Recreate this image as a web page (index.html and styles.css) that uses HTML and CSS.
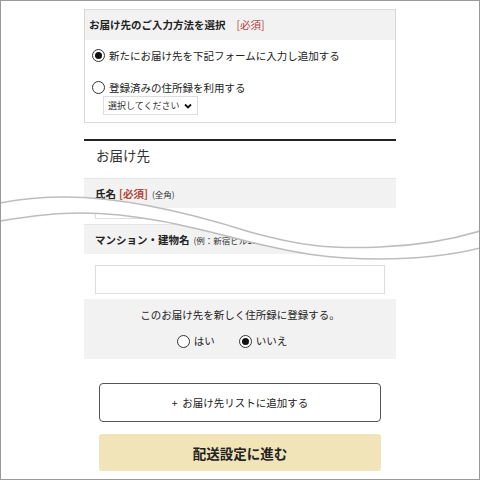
FILE: index.html
```html
<!DOCTYPE html>
<html lang="ja">
<head>
    <meta charset="UTF-8">
    <meta name="viewport" content="width=device-width, initial-scale=1.0">
    <title>お届け先の入力</title>
    <link rel="stylesheet" href="styles.css">
</head>
<body>
    <div class="frame">
        <div class="col">
            <div class="method">
                <div class="method-head">お届け先のご入力方法を選択<span class="req-plain">[必須]</span></div>
                <div class="method-body">
                    <div class="opt"><span class="radio on"></span>新たにお届け先を下記フォームに入力し追加する</div>
                    <div class="opt opt-2"><span class="radio"></span>登録済みの住所録を利用する</div>
                    <div class="select"><span>選択してください</span>
                        <svg width="8" height="6" viewBox="0 0 8 6"><path d="M1 1.5 L4 4.5 L7 1.5" fill="none" stroke="#111" stroke-width="1.8"/></svg>
                    </div>
                </div>
            </div>

            <div class="rule"></div>
            <div class="title">お届け先</div>

            <div class="row-label"><b>氏名</b><b class="req">[必須]</b><span class="note">(全角)</span></div>
            <div class="stub"></div>

            <div class="row-label row-2"><b>マンション・建物名</b><span class="note">(例：新宿ビル101)</span></div>
            <div class="field"></div>

            <div class="register">
                <p>このお届け先を新しく住所録に登録する。</p>
                <div class="yesno">
                    <span class="choice"><span class="radio"></span>はい</span>
                    <span class="choice"><span class="radio on"></span>いいえ</span>
                </div>
            </div>

            <div class="btn-add">+&nbsp; お届け先リストに追加する</div>
            <div class="btn-next">配送設定に進む</div>
        </div>

        <!-- omitted part of the form -->
        <svg class="cut" width="478" height="478" viewBox="1 1 478 478">
            <path d="M0,203 C20,199 40,197 65,197 C120,197 190,213 250,232 C300,246 330,249 380,247 C430,245 460,237 480,231 L480,209 L0,209 Z" fill="#fff"/>
            <path d="M0,203 C20,199 40,197 65,197 C120,197 190,213 250,232 C300,246 330,249 380,247 C430,245 460,237 480,231 L480,248 C460,253 430,259 380,259 C330,259 300,254 250,242 C195,228 140,213 80,213 C55,213 30,216 0,221 Z" fill="#fff"/>
            <path d="M0,203 C20,199 40,197 65,197 C120,197 190,213 250,232 C300,246 330,249 380,247 C430,245 460,237 480,231" fill="none" stroke="#bdbdbd" stroke-width="1.6"/>
            <path d="M0,221 C30,216 55,213 80,213 C140,213 195,228 250,242 C300,254 330,259 380,259 C430,259 460,253 480,248" fill="none" stroke="#bdbdbd" stroke-width="1.6"/>
        </svg>
    </div>
</body>
</html>
```

FILE: styles.css
```css
body {
    margin: 0;
    font-family: "Noto Sans CJK JP", "Noto Sans", sans-serif;
    color: #222;
}
.frame {
    width: 480px;
    height: 480px;
    box-sizing: border-box;
    border: 1px solid #999;
    position: relative;
    overflow: hidden;
    background: #fff;
}
.cut {
    position: absolute;
    top: 0;
    left: 0;
}
.col {
    width: 312px;
    margin: 0 auto;
    padding-top: 8px;
}
.method {
    border: 1px solid #d9d9d9;
}
.method-head {
    background: #f2f2f2;
    height: 30px;
    line-height: 30px;
    padding-left: 4px;
    font-size: 10.5px;
    font-weight: bold;
}
.req-plain {
    color: #b3443a;
    font-weight: normal;
    margin-left: 11px;
}
.method-body {
    padding: 7px 7px 7px;
}
.opt {
    display: flex;
    align-items: center;
    gap: 4px;
    height: 16px;
    font-size: 10.5px;
}
.opt-2 {
    margin-top: 16px;
}
.radio {
    width: 13px;
    height: 13px;
    box-sizing: border-box;
    border: 1px solid #333;
    border-radius: 50%;
    display: inline-flex;
    align-items: center;
    justify-content: center;
    background: #fff;
    flex-shrink: 0;
}
.radio.on::after {
    content: "";
    width: 7px;
    height: 7px;
    border-radius: 50%;
    background: #111;
}
.select {
    margin: 1px 0 0 11px;
    width: 95px;
    height: 19px;
    box-sizing: border-box;
    border: 1px solid #ddd;
    display: flex;
    align-items: center;
    justify-content: space-between;
    padding: 0 5px 0 4px;
    font-size: 9px;
    white-space: nowrap;
    color: #333;
}
.rule {
    margin-top: 16px;
    height: 2px;
    background: #222;
}
.title {
    margin-top: 4px;
    padding-left: 12px;
    height: 20px;
    line-height: 20px;
    font-size: 13.5px;
    color: #333;
}
.row-label {
    margin-top: 13px;
    height: 30px;
    box-sizing: border-box;
    border-top: 1px solid #e6e6e6;
    background: #f2f2f2;
    display: flex;
    align-items: center;
    padding-left: 11px;
    font-size: 10.5px;
}
.row-2 {
    margin-top: 5px;
}
.req {
    color: #b3443a;
    margin-left: 3px;
}
.note {
    font-size: 8.5px;
    margin-left: 4px;
    color: #333;
}
.stub {
    margin: 3px 0 0 11px;
    width: 110px;
    height: 8px;
    box-sizing: border-box;
    border-left: 1px solid #ddd;
    border-bottom: 1px solid #ddd;
}
.field {
    margin: 11px 11px 0;
    height: 29px;
    box-sizing: border-box;
    border: 1px solid #ddd;
}
.register {
    margin-top: 5px;
    background: #f2f2f2;
    height: 60px;
    box-sizing: border-box;
    padding-top: 8px;
    font-size: 10.5px;
}
.register p {
    margin: 0;
    text-align: center;
    line-height: 16px;
}
.yesno {
    margin-top: 10px;
    display: flex;
    justify-content: center;
    gap: 24px;
    padding-right: 16px;
    line-height: 16px;
}
.choice {
    display: flex;
    align-items: center;
    gap: 4px;
}
.btn-add {
    margin: 24px auto 0;
    width: 282px;
    height: 39px;
    box-sizing: border-box;
    border: 1px solid #555;
    border-radius: 4px;
    display: flex;
    align-items: center;
    justify-content: center;
    font-size: 10.5px;
}
.btn-next {
    margin: 12px auto 0;
    width: 282px;
    height: 37px;
    background: #f0e4b8;
    border-radius: 3px;
    display: flex;
    align-items: center;
    justify-content: center;
    font-size: 13.5px;
    font-weight: bold;
}
```
